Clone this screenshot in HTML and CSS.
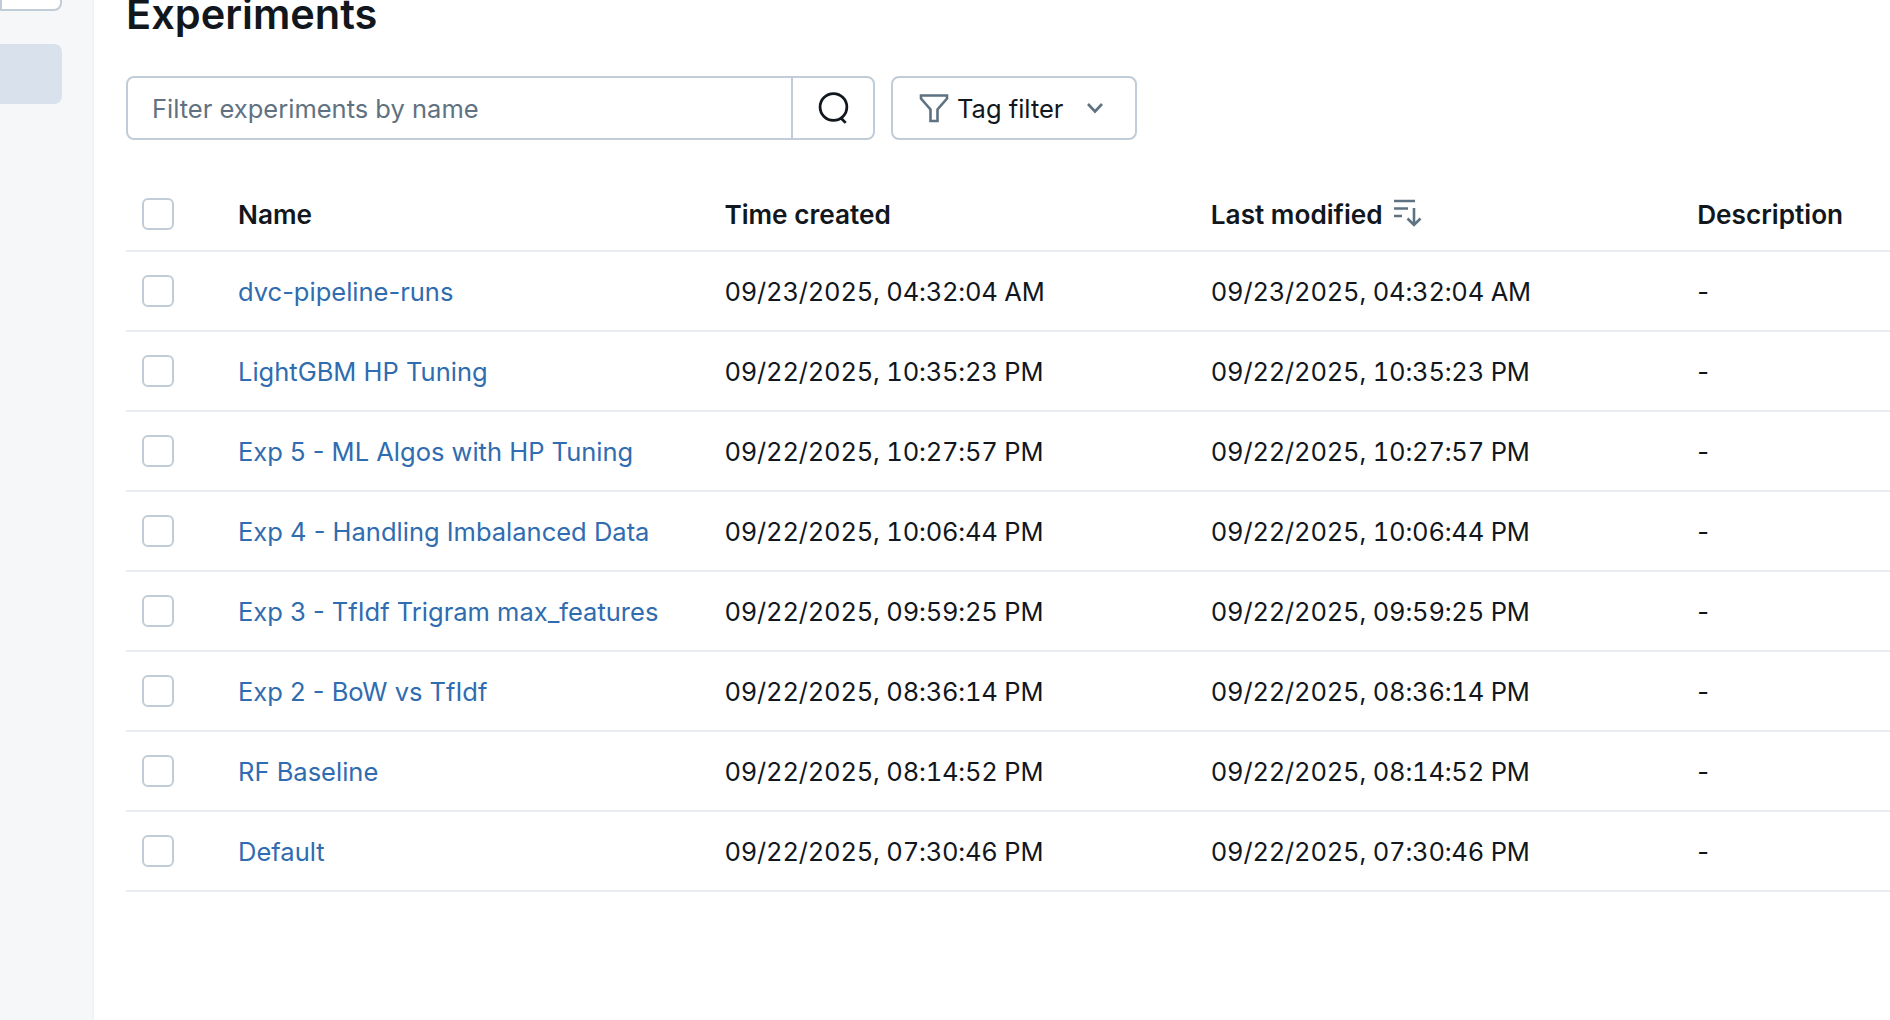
FILE: index.html
```html
<!DOCTYPE html>
<html lang="en">
<head>
    <meta charset="UTF-8">
    <title>Experiments</title>
    <link rel="stylesheet" href="styles.css">
</head>
<body>
<div class="app">
    <aside class="sidebar">
        <div class="sideItem"></div>
        <div class="sideItem active"></div>
    </aside>
    <main class="content">
        <h1 class="title">Experiments</h1>
        <div class="toolbar">
            <div class="search">
                <input class="searchInput" type="text" placeholder="Filter experiments by name">
                <button class="searchBtn" aria-label="Search">
                    <svg width="34" height="34" viewBox="0 0 32 32" fill="none" stroke="#11171c" stroke-width="2.6">
                        <circle cx="15.500" cy="15" r="12.600"/>
                        <path d="M22.500 25.500l4.500 4.500"/>
                    </svg>
                </button>
            </div>
            <button class="tagFilter">
                <svg class="funnel" width="30" height="30" viewBox="0 0 30 30" fill="none" stroke="#5f7281" stroke-width="2.6">
                    <path d="M2 2.500h26v3L18.500 16.500V28h-7V16.500L2 5.500z"/>
                </svg>
                <span>Tag filter</span>
                <svg class="chevron" width="18" height="12" viewBox="0 0 18 12" fill="none" stroke="#5f7281" stroke-width="2.6">
                    <path d="M2 2l7 7.500L16 2"/>
                </svg>
            </button>
        </div>
        <table class="grid">
            <colgroup>
                <col class="colCheck">
                <col class="colData">
                <col class="colData">
                <col class="colData">
                <col>
            </colgroup>
            <thead>
                <tr>
                    <th><span class="check"></span></th>
                    <th>Name</th>
                    <th>Time created</th>
                    <th>
                        <span class="sortHead">Last modified
                            <svg width="30" height="28" viewBox="0 0 30 28" fill="none" stroke="#5f7281" stroke-width="2.6">
                                <path d="M1 2h21M1 9.500h14M1 17h8"/>
                                <path d="M21 9v17M14.500 19.500l6.500 6.500 6.500-6.500"/>
                            </svg>
                        </span>
                    </th>
                    <th>Description</th>
                </tr>
            </thead>
            <tbody>
                <tr>
                    <td><span class="check"></span></td>
                    <td><a href="#">dvc-pipeline-runs</a></td>
                    <td class="date">09/23/2025, 04:32:04 AM</td>
                    <td class="date">09/23/2025, 04:32:04 AM</td>
                    <td>-</td>
                </tr>
                <tr>
                    <td><span class="check"></span></td>
                    <td><a href="#">LightGBM HP Tuning</a></td>
                    <td class="date">09/22/2025, 10:35:23 PM</td>
                    <td class="date">09/22/2025, 10:35:23 PM</td>
                    <td>-</td>
                </tr>
                <tr>
                    <td><span class="check"></span></td>
                    <td><a href="#">Exp 5 - ML Algos with HP Tuning</a></td>
                    <td class="date">09/22/2025, 10:27:57 PM</td>
                    <td class="date">09/22/2025, 10:27:57 PM</td>
                    <td>-</td>
                </tr>
                <tr>
                    <td><span class="check"></span></td>
                    <td><a href="#">Exp 4 - Handling Imbalanced Data</a></td>
                    <td class="date">09/22/2025, 10:06:44 PM</td>
                    <td class="date">09/22/2025, 10:06:44 PM</td>
                    <td>-</td>
                </tr>
                <tr>
                    <td><span class="check"></span></td>
                    <td><a href="#">Exp 3 - TfIdf Trigram max_features</a></td>
                    <td class="date">09/22/2025, 09:59:25 PM</td>
                    <td class="date">09/22/2025, 09:59:25 PM</td>
                    <td>-</td>
                </tr>
                <tr>
                    <td><span class="check"></span></td>
                    <td><a href="#">Exp 2 - BoW vs TfIdf</a></td>
                    <td class="date">09/22/2025, 08:36:14 PM</td>
                    <td class="date">09/22/2025, 08:36:14 PM</td>
                    <td>-</td>
                </tr>
                <tr>
                    <td><span class="check"></span></td>
                    <td><a href="#">RF Baseline</a></td>
                    <td class="date">09/22/2025, 08:14:52 PM</td>
                    <td class="date">09/22/2025, 08:14:52 PM</td>
                    <td>-</td>
                </tr>
                <tr>
                    <td><span class="check"></span></td>
                    <td><a href="#">Default</a></td>
                    <td class="date">09/22/2025, 07:30:46 PM</td>
                    <td class="date">09/22/2025, 07:30:46 PM</td>
                    <td>-</td>
                </tr>
            </tbody>
        </table>
    </main>
</div>
</body>
</html>
```

FILE: styles.css
```css
html, body {
    margin: 0;
    height: 100%;
    overflow: hidden;
    background: #fff;
}

.app {
    display: flex;
    height: 1020px;
    font-family: Inter, "Liberation Sans", sans-serif;
    font-size: 25.5px;
    color: #11171c;
}

.sidebar {
    width: 94px;
    flex-shrink: 0;
    box-sizing: border-box;
    padding-right: 32px;
    background: #f6f7f9;
    box-shadow: inset -3px 0 3px -2px #eceef1;
}

.sideItem {
    height: 60px;
    margin-top: -49px;
    box-sizing: border-box;
    background: #fff;
    border: 2px solid #c0cdd8;
    border-radius: 0 8px 8px 0;
}

.sideItem.active {
    margin-top: 33px;
    background: #d9e2ec;
    border: none;
}

.content {
    flex: 1;
    min-width: 0;
    padding-left: 32px;
}

.title {
    margin: -10px 0 0;
    font-size: 41.500px;
    line-height: 48px;
    font-weight: 600;
}

.toolbar {
    display: flex;
    gap: 16px;
    margin-top: 38px;
    height: 64px;
}

.search {
    display: flex;
    width: 749px;
    box-sizing: border-box;
    border: 2px solid #c0cdd8;
    border-radius: 8px;
}

.searchInput {
    flex: 1;
    min-width: 0;
    padding: 0 24px;
    border: none;
    outline: none;
    background: none;
    font: inherit;
    color: inherit;
}

.searchInput::placeholder {
    color: #5f7281;
    opacity: 1;
}

.searchBtn {
    width: 82px;
    padding: 0 0 0 2px;
    display: flex;
    align-items: center;
    justify-content: center;
    background: none;
    border: none;
    border-left: 2px solid #c0cdd8;
}

.tagFilter {
    display: flex;
    align-items: center;
    width: 246px;
    box-sizing: border-box;
    padding: 0 0 0 26px;
    background: #fff;
    border: 2px solid #c0cdd8;
    border-radius: 8px;
    font: inherit;
    color: inherit;
}

.funnel {
    margin-right: 8px;
}

.chevron {
    margin-left: 23px;
}

.grid {
    width: 100%;
    margin-top: 32px;
    table-layout: fixed;
    border-collapse: collapse;
}

.colCheck {
    width: 112px;
}

.colData {
    width: 486.400px;
}

.grid th,
.grid td {
    height: 80px;
    box-sizing: border-box;
    padding: 0;
    text-align: left;
    white-space: nowrap;
    border-bottom: 2px solid #e8ecf0;
}

.grid th {
    height: 79px;
    padding-top: 7px;
    font-size: 26.200px;
    font-weight: 600;
}

.grid td.date {
    font-variant-numeric: tabular-nums;
    letter-spacing: -0.2px;
}

.grid a {
    color: #2f6cb0;
    text-decoration: none;
}

.check {
    display: block;
    width: 32px;
    height: 32px;
    margin-left: 16px;
    box-sizing: border-box;
    background: #fff;
    border: 2px solid #c0cdd8;
    border-radius: 6px;
}

th .check {
    margin-top: -1px;
}

.sortHead {
    display: inline-flex;
    align-items: center;
    gap: 10px;
}

.sortHead svg {
    margin-top: -4px;
}
```
